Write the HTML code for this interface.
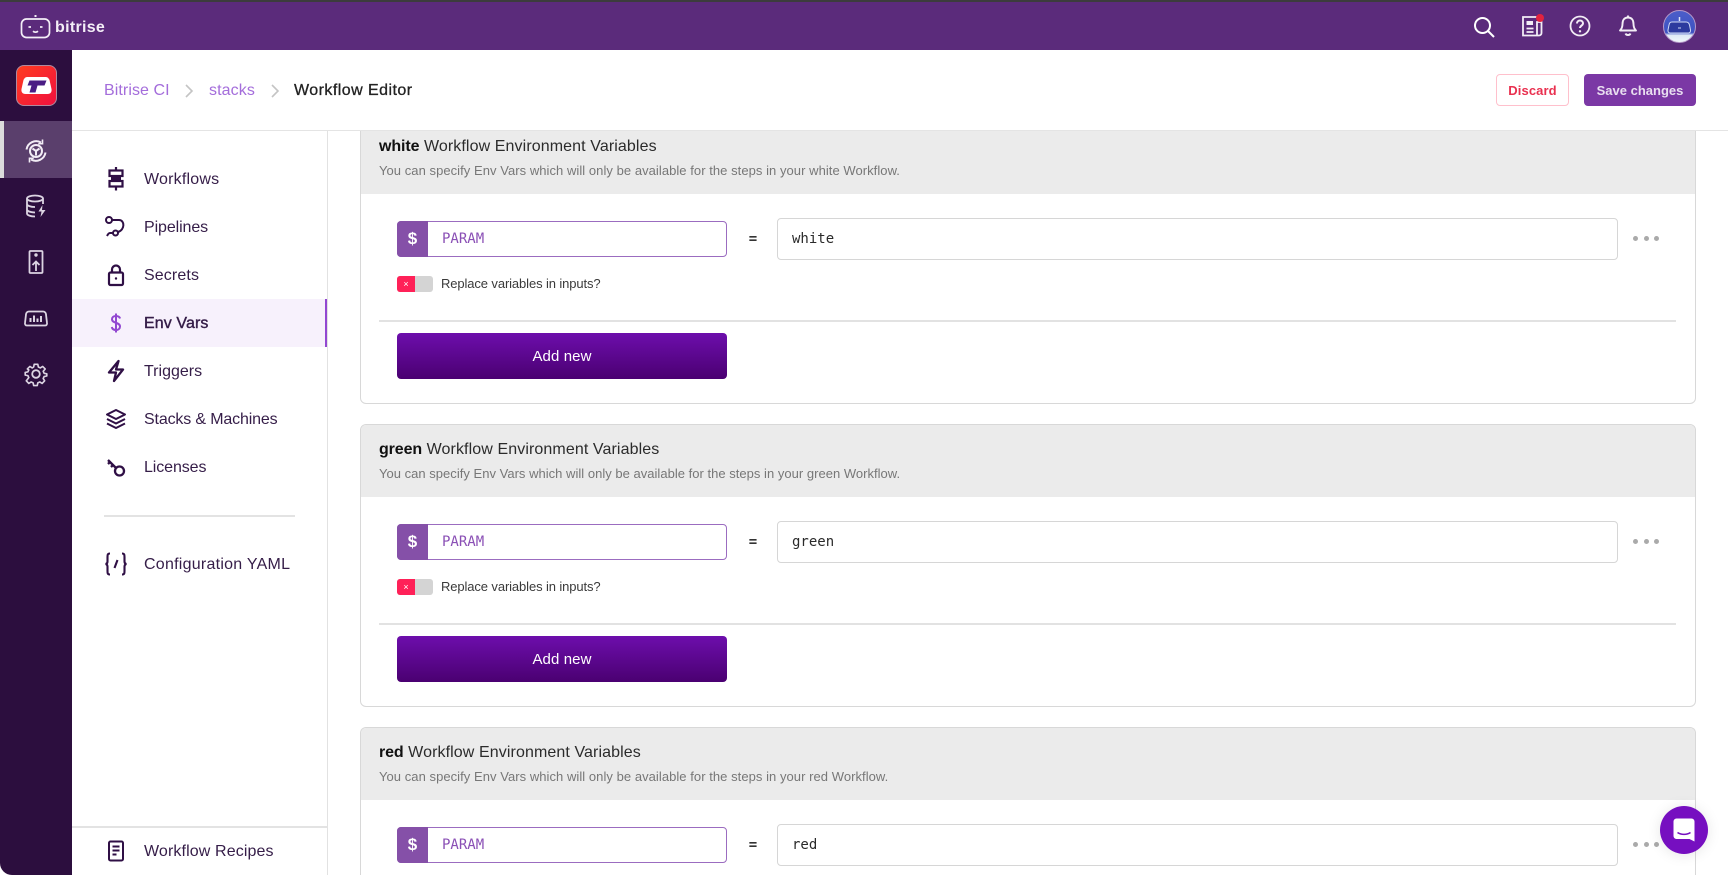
<!DOCTYPE html>
<html><head><meta charset="utf-8"><title>Workflow Editor</title>
<style>
*{box-sizing:border-box}
html,body{margin:0;padding:0;width:1728px;height:875px;overflow:hidden;background:#fff;font-family:"Liberation Sans",sans-serif}
#r{position:relative;width:1728px;height:875px;overflow:hidden;background:#fff}
.a{position:absolute}
.t{position:absolute;white-space:nowrap;line-height:20px}
.nav{position:absolute;left:144px;white-space:nowrap;font-size:16px;line-height:20px;color:#351d48;letter-spacing:.12px}
svg{position:absolute;overflow:visible}
.card{position:absolute;left:360px;width:1336px;height:283px;border:1px solid #d8d8d8;border-radius:6px;background:#fff;overflow:hidden}
.hd{position:absolute;left:0;top:0;right:0;height:72px;background:#ebebeb}
.h1{position:absolute;left:18px;top:15px;font-size:16px;line-height:20px;color:#2b2b2b;white-space:nowrap;letter-spacing:.1px}
.h1 b{color:#111;letter-spacing:-.1px}
.h2{position:absolute;left:18px;top:40px;font-size:13px;line-height:18px;color:#777;white-space:nowrap;letter-spacing:.05px}
.dl{position:absolute;left:36px;top:99px;width:31px;height:36px;background:#8550a8;border-radius:4px 0 0 4px;color:#fff;font:bold 17px/36px "Liberation Sans",sans-serif;text-align:center}
.in{position:absolute;left:36px;top:99px;width:330px;height:36px;border:1.5px solid #9b6cc0;border-radius:4px}
.ph{position:absolute;left:81px;top:107px;font:14px/20px "DejaVu Sans Mono",monospace;color:#8a4fb5}
.eq{position:absolute;left:386px;top:107px;width:12px;text-align:center;font:bold 14px/20px "DejaVu Sans Mono",monospace;color:#333}
.val{position:absolute;left:416px;top:96px;width:841px;height:42px;border:1.5px solid #d6d6d6;border-radius:4px;font:14px/41px "DejaVu Sans Mono",monospace;color:#2a2a2a;padding-left:14px}
.dot{position:absolute;top:114px;width:5px;height:5px;border-radius:50%;background:#aaa}
.tg{position:absolute;left:36px;top:154px;width:36px;height:16px;background:#d4d4d4;border-radius:3px}
.tg i{position:absolute;left:0;top:0;width:18px;height:16px;background:#ff2158;border-radius:3px 0 0 3px;color:#fff;font:normal 9px/16px "Liberation Sans",sans-serif;text-align:center}
.lb{position:absolute;left:80px;top:153px;font-size:13px;line-height:18px;color:#3a3a3a;white-space:nowrap;letter-spacing:-.11px}
.dv{position:absolute;left:18px;top:198px;width:1297px;height:1.5px;background:#e2e2e2}
.btn{position:absolute;left:36px;top:211px;width:330px;height:46px;border-radius:4px;background:linear-gradient(#6d0eac,#4a0071);color:#fff;font-size:15px;line-height:48px;text-align:center;letter-spacing:.1px}
</style></head>
<body>
<div id="r">
<!-- main cards -->
<div class="card" style="top:121px">
 <div class="hd"></div>
 <div class="h1" style="top:15px"><b>white</b> Workflow Environment Variables</div>
 <div class="h2">You can specify Env Vars which will only be available for the steps in your white Workflow.</div>
 <div class="in"></div><div class="dl">$</div><div class="ph">PARAM</div><div class="eq">=</div>
 <div class="val">white</div>
 <div class="dot" style="left:1272px"></div><div class="dot" style="left:1283px"></div><div class="dot" style="left:1293px"></div>
 <div class="tg"><i>×</i></div><div class="lb">Replace variables in inputs?</div>
 <div class="dv"></div><div class="btn">Add new</div>
</div>
<div class="card" style="top:424px">
 <div class="hd"></div>
 <div class="h1"><b>green</b> Workflow Environment Variables</div>
 <div class="h2" style="letter-spacing:.02px">You can specify Env Vars which will only be available for the steps in your green Workflow.</div>
 <div class="in"></div><div class="dl">$</div><div class="ph">PARAM</div><div class="eq">=</div>
 <div class="val">green</div>
 <div class="dot" style="left:1272px"></div><div class="dot" style="left:1283px"></div><div class="dot" style="left:1293px"></div>
 <div class="tg"><i>×</i></div><div class="lb">Replace variables in inputs?</div>
 <div class="dv"></div><div class="btn">Add new</div>
</div>
<div class="card" style="top:727px;height:148px;border-bottom:none;border-radius:6px 6px 0 0">
 <div class="hd"></div>
 <div class="h1"><b>red</b> Workflow Environment Variables</div>
 <div class="h2">You can specify Env Vars which will only be available for the steps in your red Workflow.</div>
 <div class="in"></div><div class="dl">$</div><div class="ph">PARAM</div><div class="eq">=</div>
 <div class="val">red</div>
 <div class="dot" style="left:1272px"></div><div class="dot" style="left:1283px"></div><div class="dot" style="left:1293px"></div>
</div>

<!-- header white -->
<div class="a" style="left:72px;top:50px;width:1656px;height:81px;background:#fff;border-bottom:1.5px solid #e4e4e4"></div>
<div class="t" style="left:104px;top:81px;font-size:16px;color:#a46ddb;letter-spacing:.08px">Bitrise CI</div>
<svg style="left:184px;top:84px" width="10" height="14" fill="none" stroke="#c4c4c4" stroke-width="1.6"><path d="M2 1l6 6-6 6"/></svg>
<div class="t" style="left:209px;top:81px;font-size:16px;color:#a46ddb;letter-spacing:.1px">stacks</div>
<svg style="left:270px;top:84px" width="10" height="14" fill="none" stroke="#c4c4c4" stroke-width="1.6"><path d="M2 1l6 6-6 6"/></svg>
<div class="t" style="left:294px;top:81px;font-size:16px;color:#222;-webkit-text-stroke:.3px #222;letter-spacing:.45px">Workflow Editor</div>
<div class="a" style="left:1496px;top:74px;width:73px;height:32px;border:1.5px solid #ffc0cc;border-radius:4px;color:#e9304f;font-size:13px;font-weight:bold;line-height:31px;text-align:center;letter-spacing:.1px">Discard</div>
<div class="a" style="left:1584px;top:74px;width:112px;height:32px;background:#7b38a5;border-radius:4px;color:#e9dff0;font-size:13px;font-weight:bold;line-height:33px;text-align:center">Save changes</div>

<!-- sidebar -->
<div class="a" style="left:72px;top:131px;width:256px;height:744px;background:#fff;border-right:1.5px solid #e2e2e2"></div>
<div class="a" style="left:72px;top:299px;width:255px;height:48px;background:#f7f1fc;border-right:2px solid #9247d1"></div>
<div class="nav" style="top:170px;letter-spacing:.2px">Workflows</div>
<div class="nav" style="top:218px;letter-spacing:-.1px">Pipelines</div>
<div class="nav" style="top:266px">Secrets</div>
<div class="nav" style="top:314px;-webkit-text-stroke:.4px #351d48;letter-spacing:.1px">Env Vars</div>
<div class="nav" style="top:362px;letter-spacing:0">Triggers</div>
<div class="nav" style="top:410px;letter-spacing:-.15px">Stacks &amp; Machines</div>
<div class="nav" style="top:458px;letter-spacing:-.1px">Licenses</div>
<div class="a" style="left:104px;top:515px;width:191px;height:1.5px;background:#e3e3e3"></div>
<div class="nav" style="top:555px;letter-spacing:.25px">Configuration YAML</div>
<div class="a" style="left:72px;top:826px;width:255px;height:1.5px;background:#e3e3e3"></div>
<div class="nav" style="top:842px">Workflow Recipes</div>

<!-- sidebar icons -->
<svg style="left:104px;top:167px" width="24" height="24" fill="none" stroke="#2f0f45" stroke-width="2.2"><path d="M12 0v3M12 20v3.500"/><rect x="5.500" y="3.500" width="13" height="5.500"/><rect x="7" y="9" width="10" height="5" fill="#2f0f45" stroke="none"/><rect x="5.500" y="14" width="13" height="5.500"/></svg>
<svg style="left:104px;top:215px" width="24" height="24" fill="none" stroke="#2f0f45" stroke-width="2"><circle cx="5" cy="5" r="3"/><circle cx="11.500" cy="18" r="2.500"/><path d="M8 5h7c6 0 6 10-1 12M9 18H6c-1 0-2 1-3 3"/></svg>
<svg style="left:104px;top:263px" width="24" height="24" fill="none" stroke="#2f0f45" stroke-width="2.200"><rect x="5" y="9.500" width="14" height="12.500" rx="1.500"/><path d="M8 9.500V6.500a4 4 0 018 0v3"/><circle cx="12" cy="15.500" r="1.200" fill="#2f0f45" stroke="none"/></svg>
<svg style="left:104px;top:311px" width="24" height="24" fill="none" stroke="#9247d1" stroke-width="2"><path d="M16 7.500C15.500 5.500 14 5 12 5c-2.500 0-4 1.300-4 3.200C8 12.500 16 11 16 15.500c0 2-1.600 3.500-4 3.500-2.300 0-3.800-1-4.200-3M12 2.500V21.500"/></svg>
<svg style="left:104px;top:359px" width="24" height="24" fill="none" stroke="#2f0f45" stroke-width="2.300" stroke-linejoin="round"><path d="M14.500 2L5 13.500h7L10 22l9-11.500h-7z"/></svg>
<svg style="left:104px;top:407px" width="24" height="24" fill="none" stroke="#2f0f45" stroke-width="2" stroke-linejoin="round"><path d="M12 3L3 7.500 12 12l9-4.500z"/><path d="M3 12l9 4.500 9-4.500M3 16.500L12 21l9-4.500"/></svg>
<svg style="left:104px;top:455px" width="24" height="24" fill="none" stroke="#2f0f45" stroke-width="2.300"><circle cx="15.500" cy="16" r="4.500"/><path d="M12 13L4 5M4 9l2-2M7 12l2-2"/></svg>
<svg style="left:104px;top:552px" width="24" height="24" fill="none" stroke="#2f0f45" stroke-width="2.100"><path d="M6 1.500C3.500 1.500 3.500 3 3.500 5v4.500c0 1-.5 2.300-2 2.500 1.500.2 2 1.500 2 2.500V19c0 2 0 3.500 2.500 3.500M18 1.500c2.500 0 2.500 1.500 2.500 3.500v4.500c0 1 .5 2.300 2 2.500-1.500.2-2 1.500-2 2.500V19c0 2 0 3.500-2.500 3.500M13.500 8l-3 8"/></svg>
<svg style="left:104px;top:839px" width="24" height="24" fill="none" stroke="#2f0f45" stroke-width="2"><rect x="5" y="2.500" width="14" height="19" rx="1.500"/><path d="M8.500 7.500h7M8.500 11.500h7M8.500 15.500h4"/></svg>

<!-- left rail -->
<div class="a" style="left:0;top:50px;width:72px;height:825px;background:#2c0e3e;border-radius:0 0 0 12px"></div>
<div class="a" style="left:0;top:121px;width:72px;height:57px;background:#5a3f6c"></div>
<div class="a" style="left:0;top:121px;width:4px;height:57px;background:#dcdcdc"></div>
<div class="a" style="left:16px;top:65px;width:41px;height:41px;border-radius:8px;border:1.500px solid #b08a9e;background:linear-gradient(135deg,#ff3d1f,#f0103f)"></div>
<svg style="left:21px;top:73px" width="32" height="26"><path d="M7 3h18c2 0 3 1 4 3l2 9c.5 3-1 5-4 5H5c-3 0-4.500-2-4-5l2-9c1-2 2-3 4-3z" fill="#fff" transform="translate(-.5 1)"/><path d="M9 8h17l-2 5h-7l-2 7H9l2-7H7z" fill="#4a1c84" transform="translate(-.5 -.5)"/></svg>
<svg style="left:24px;top:139px" width="24" height="24" fill="none" stroke="#f2edf5" stroke-width="2"><path d="M2.500 10.500A9.800 9.800 0 0117 3.500M21.500 13.500A9.800 9.800 0 017 20.500"/><path d="M18.500 .5v4.200h-4.200M5.500 23.500v-4.200h4.200" stroke-width="1.600"/><circle cx="12" cy="12" r="6"/><path d="M8.500 9.500L12 12l3.500-2.500M12 12v4.500"/></svg>
<svg style="left:24px;top:194px" width="24" height="24" fill="none" stroke="#dcd4e2" stroke-width="1.800"><ellipse cx="11" cy="4.500" rx="8" ry="3"/><path d="M3 4.500v15c0 1.700 3.500 3 8 3M19 4.500V10M3 10c0 1.700 3.500 3 8 3M3 15.500c0 1.500 3 2.800 8 3"/><path d="M18.500 11l-4 6.500h3l-1 5.500 5-7h-3.500z" fill="#dcd4e2" stroke="none"/></svg>
<svg style="left:24px;top:250px" width="24" height="24" fill="none" stroke="#dcd4e2" stroke-width="1.800"><rect x="5.500" y="1" width="13" height="22" rx="1"/><path d="M12 21v-9M8.500 15l3.500-3.500 3.500 3.500"/><circle cx="12" cy="5" r=".8" fill="#dcd4e2"/></svg>
<svg style="left:24px;top:306px" width="24" height="24" fill="none" stroke="#dcd4e2" stroke-width="1.800"><path d="M5 5.500h14a3 3 0 013 3L23 17a2 2 0 01-2 2.500H3A2 2 0 011 17L2 8.500a3 3 0 013-3z"/><path d="M6.500 16v-4M10 16V9.500M13.500 16v-3.500M17 16v-6" stroke-width="2"/></svg>
<svg style="left:24px;top:362px" width="24" height="24" fill="none" stroke="#dcd4e2" stroke-width="1.800" stroke-linejoin="round"><path d="M10 2h4l.6 3 2.200 1 2.600-1.600 2.800 2.800L20 9.800l1 2.200 3 .6v2.400l-3 .6-1 2.200 1.600 2.600-2.800 2.800-2.600-1.600-2.200 1-.6 3h-4l-.6-3-2.200-1-2.600 1.600-2.800-2.800L4 16.800 3 14.600l-3-.6v-3l3-.6 1-2.200L2.400 7.200l2.800-2.800 2.600 1.600 1.600-1z" transform="translate(1.200 .5) scale(.9)"/><circle cx="12" cy="12" r="3.800"/></svg>

<!-- top bar -->
<div class="a" style="left:0;top:0;width:1728px;height:50px;background:#5b2b7b"></div>
<div class="a" style="left:0;top:0;width:1728px;height:2px;background:#3c3c3c"></div>
<svg style="left:20px;top:13px" width="32" height="26" fill="none" stroke="#f4eff7" stroke-width="1.700"><rect x="1.500" y="6" width="28" height="18.500" rx="5"/><path d="M15.500 2v2" stroke-width="2"/><path d="M8.500 14h2.500M20 14h2.500M13 18.200c1.500 1.300 3.500 1.300 5 0"/></svg>
<div class="t" style="left:55px;top:18px;font-size:16px;font-weight:bold;color:#f4eff7;letter-spacing:.3px">bitrise</div>
<svg style="left:1472px;top:15px" width="24" height="24" fill="none" stroke="#fff" stroke-width="2"><circle cx="10.500" cy="10.500" r="7.500"/><path d="M16 16l6 6"/></svg>
<svg style="left:1520px;top:14px" width="24" height="24" fill="none" stroke="#f2edf5" stroke-width="1.800"><path d="M17 3H3v18.500h16a2.500 2.500 0 002.500-2.500V8H17v13"/><rect x="6.500" y="7" width="6.500" height="4" fill="#f2edf5" stroke="none"/><path d="M6.500 14.500h7M6.500 18h7"/></svg>
<div class="a" style="left:1536px;top:14px;width:8px;height:8px;border-radius:50%;background:#e2233f"></div>
<svg style="left:1568px;top:14px" width="24" height="24" fill="none" stroke="#f2edf5" stroke-width="1.800"><circle cx="12" cy="12" r="9.500"/><path d="M9 9.500a3 3 0 116 0c0 2-3 2.200-3 4.500" stroke-width="2"/><circle cx="12" cy="17.300" r="1.200" fill="#f2edf5" stroke="none"/></svg>
<svg style="left:1616px;top:14px" width="24" height="24" fill="none" stroke="#f2edf5" stroke-width="1.900" stroke-linejoin="round"><path d="M12 3.500c-4 0-5.500 3-5.500 6.500 0 3-1 5-2.500 6.500h16c-1.500-1.500-2.500-3.500-2.500-6.500 0-3.500-1.500-6.500-5.500-6.500z"/><path d="M9.500 19.500c.7 2 4.300 2 5 0M12 1.500v2"/></svg>
<div class="a" style="left:1663px;top:10px;width:33px;height:33px;border-radius:50%;border:1.500px solid #b69ac9;background:linear-gradient(#4c5ec9 0,#3d52c2 70%,#dfeaf6 78%,#f0f6fb 100%);overflow:hidden"></div>
<svg style="left:1667px;top:15px" width="26" height="22"><path d="M5 7h14c2 0 3 1 3.500 3l1 5c.3 1.500-.5 3-2 3H3c-1.500 0-2.300-1.500-2-3l1-5C2.500 8 3 7 5 7z" fill="#2c3a9e" stroke="#cfd9f5" stroke-width="1"/><path d="M12.500 2v4" stroke="#dfe6fa" stroke-width="1.500"/><path d="M11 13h3" stroke="#cfd9f5" stroke-width="1"/></svg>

<!-- intercom -->
<div class="a" style="left:1660px;top:806px;width:48px;height:48px;border-radius:50%;background:#760fc0;box-shadow:0 1px 14px rgba(0,0,0,.1)"></div>
<svg style="left:1672px;top:818px" width="24" height="26"><path d="M3 0h15a3 3 0 013 3v20l-5-2.500H3a3 3 0 01-3-3V3a3 3 0 013-3z" fill="#fff" transform="translate(1.500 .5)"/><path d="M5.500 14.500c3.500 2.500 9.500 2.500 13 0" fill="none" stroke="#760fc0" stroke-width="1.500"/></svg>
</div>
</body></html>
